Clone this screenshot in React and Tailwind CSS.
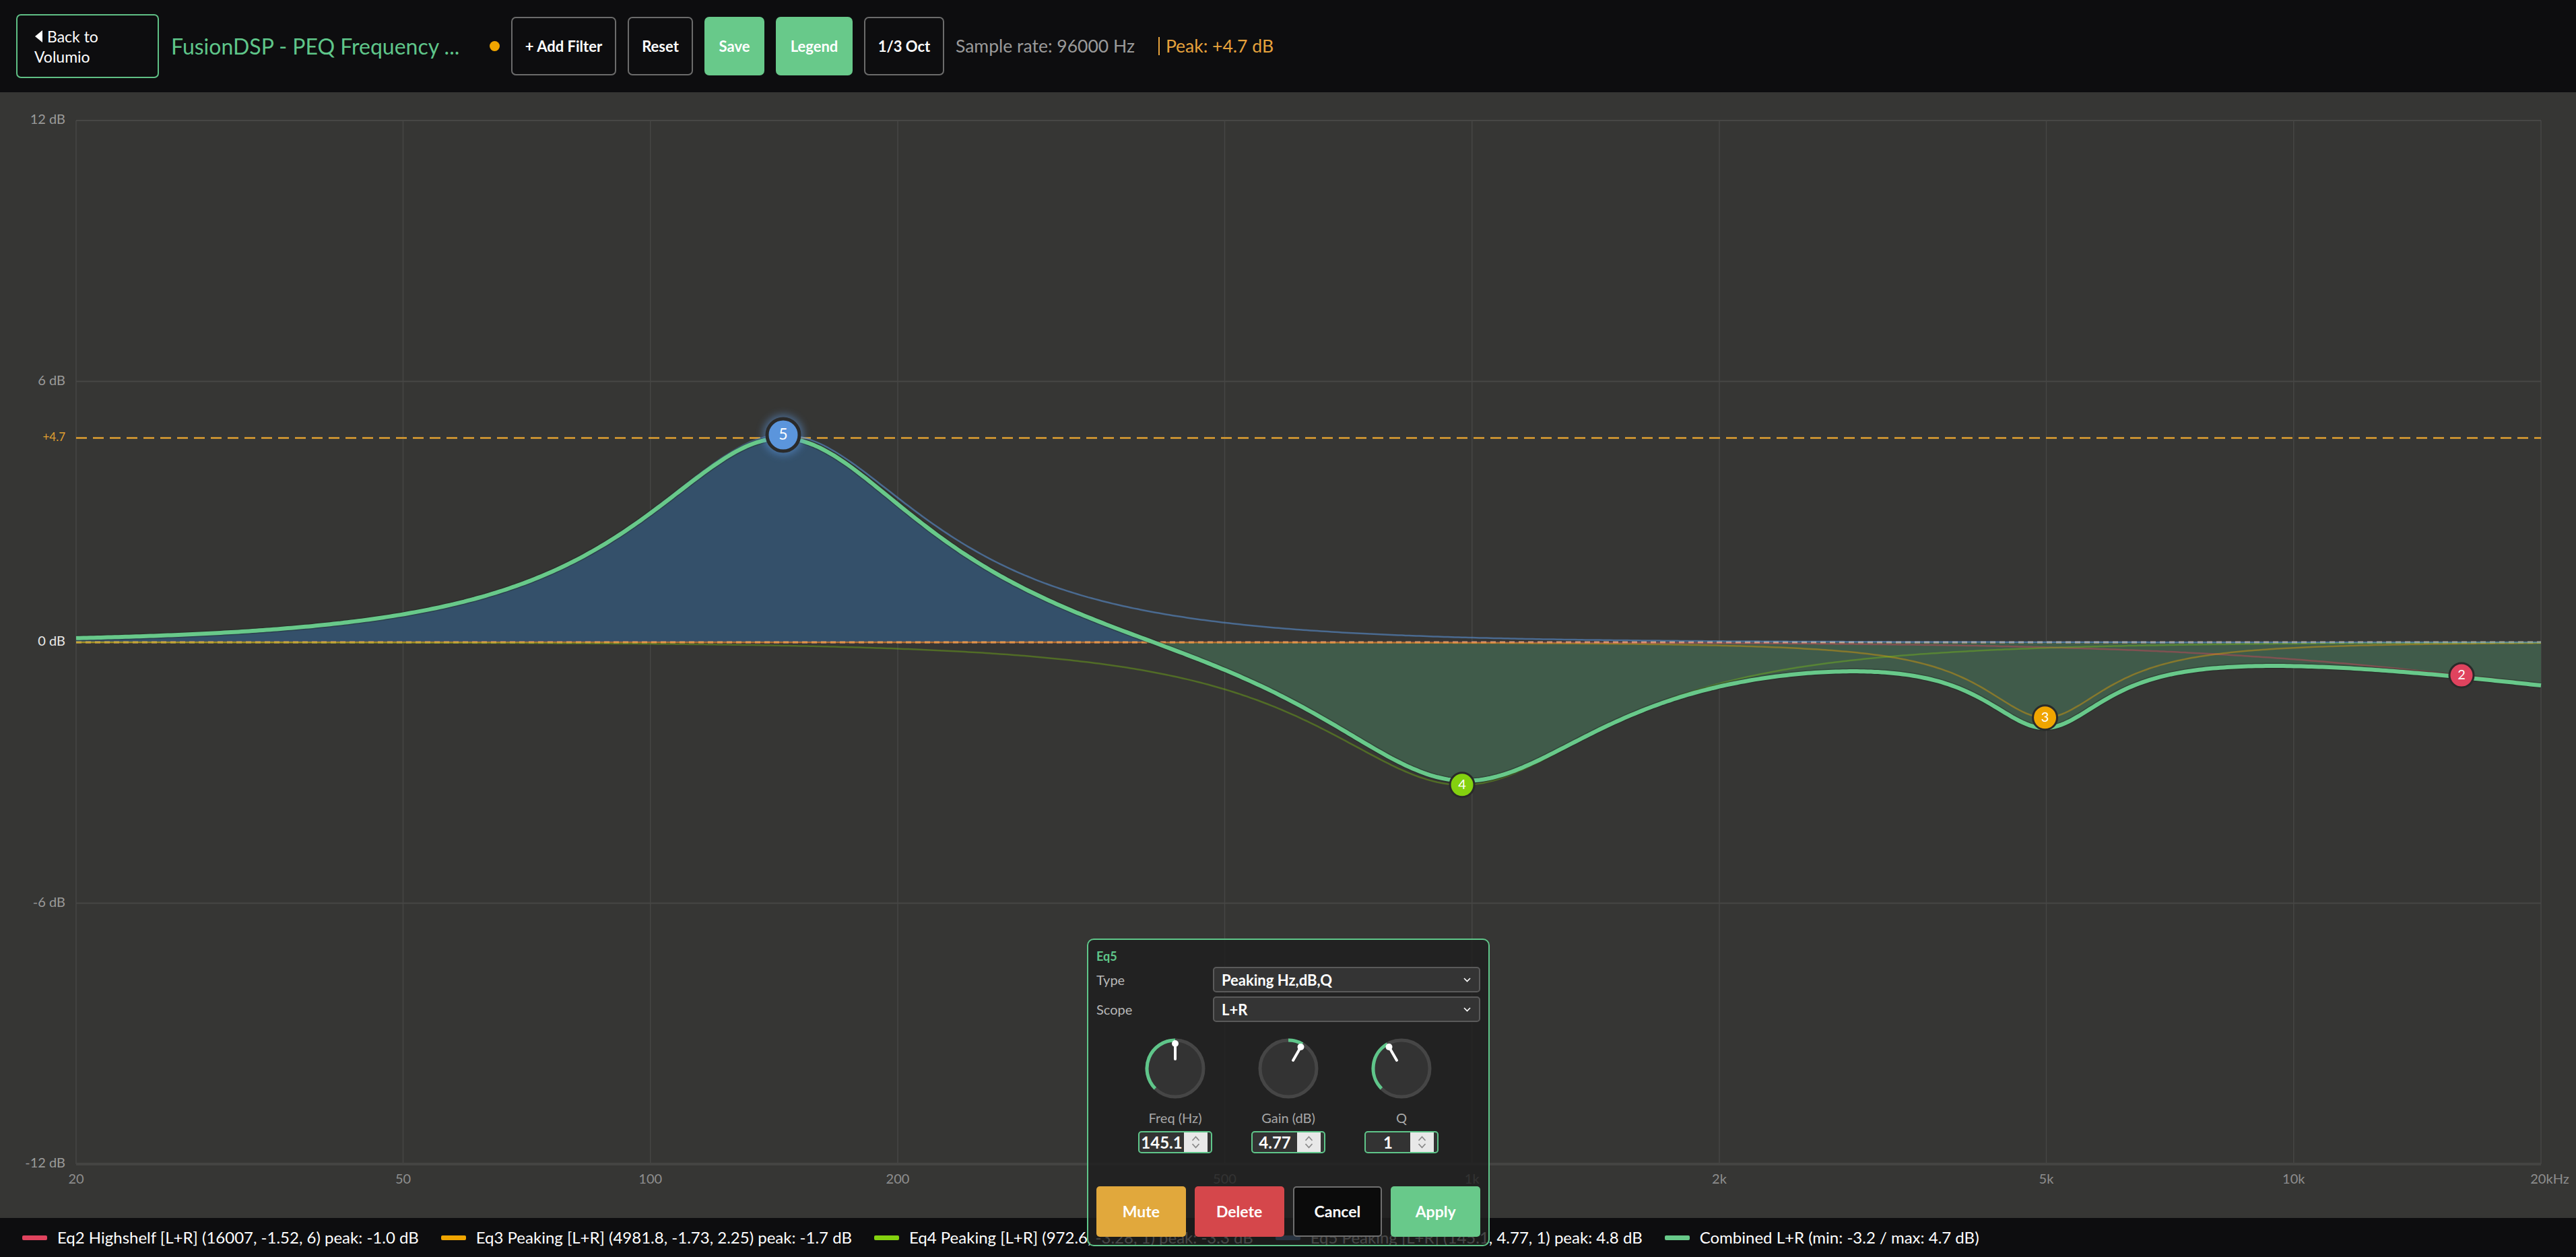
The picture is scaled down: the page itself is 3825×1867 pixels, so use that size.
import React from 'react';

const FS = 96000;

// plot geometry inside the chart svg
const X0 = 113;
const X1 = 3773;
const YT = 42;
const YB = 1592;
const ZERO = (YT + YB) / 2;
const DB_PX = (YB - YT) / 24;

const fx = (f) => X0 + ((X1 - X0) * Math.log10(f / 20)) / 3;
const fy = (db) => ZERO - db * DB_PX;

function peaking(f0, g, q) {
  const A = Math.pow(10, g / 40);
  const w0 = (2 * Math.PI * f0) / FS;
  const alpha = Math.sin(w0) / (2 * q);
  const c = Math.cos(w0);
  return {
    b: [1 + alpha * A, -2 * c, 1 - alpha * A],
    a: [1 + alpha / A, -2 * c, 1 - alpha / A],
  };
}

function highshelf(f0, g, slope) {
  const A = Math.pow(10, g / 40);
  const S = slope / 12;
  const w0 = (2 * Math.PI * f0) / FS;
  const c = Math.cos(w0);
  const alpha = (Math.sin(w0) / 2) * Math.sqrt((A + 1 / A) * (1 / S - 1) + 2);
  const sa = 2 * Math.sqrt(A) * alpha;
  return {
    b: [A * (A + 1 + (A - 1) * c + sa), -2 * A * (A - 1 + (A + 1) * c), A * (A + 1 + (A - 1) * c - sa)],
    a: [A + 1 - (A - 1) * c + sa, 2 * (A - 1 - (A + 1) * c), A + 1 - (A - 1) * c - sa],
  };
}

function magDb({ b, a }, f) {
  const w = (2 * Math.PI * f) / FS;
  const c1 = Math.cos(w), s1 = Math.sin(w), c2 = Math.cos(2 * w), s2 = Math.sin(2 * w);
  const nr = b[0] + b[1] * c1 + b[2] * c2;
  const ni = -(b[1] * s1 + b[2] * s2);
  const dr = a[0] + a[1] * c1 + a[2] * c2;
  const di = -(a[1] * s1 + a[2] * s2);
  return 10 * Math.log10((nr * nr + ni * ni) / (dr * dr + di * di));
}

const filters = [
  { id: 2, coef: highshelf(16007, -1.52, 6), f: 16007, node: -0.76, color: '#e0435e', alpha: 0.4 },
  { id: 3, coef: peaking(4981.8, -1.73, 2.25), f: 4981.8, node: -1.73, color: '#f0a500', alpha: 0.4 },
  { id: 4, coef: peaking(972.6, -3.28, 1), f: 972.6, node: -3.28, color: '#84d10f', alpha: 0.35 },
  { id: 5, coef: peaking(145.1, 4.77, 1), f: 145.1, node: 4.77, color: '#5b95dc', alpha: 0.55 },
];

const freqs = Array.from({ length: 700 }, (_, i) => 20 * Math.pow(1000, i / 699));

const toPath = (vals) =>
  vals.map((v, i) => `${i ? 'L' : 'M'}${fx(freqs[i]).toFixed(1)},${fy(v).toFixed(1)}`).join(' ');

const perFilter = filters.map((flt) => freqs.map((f) => magDb(flt.coef, f)));
const combined = freqs.map((_, i) => perFilter.reduce((s, arr) => s + arr[i], 0));
const combinedPath = toPath(combined);
const fillPath = `M${X0},${ZERO} ${combinedPath.replace(/^M/, 'L')} L${X1},${ZERO} Z`;

const gridFreqs = [20, 50, 100, 200, 500, 1000, 2000, 5000, 10000, 20000];
const freqLabels = ['20', '50', '100', '200', '500', '1k', '2k', '5k', '10k', '20kHz'];
const dbLines = [12, 6, 0, -6, -12];

function Chart() {
  return (
    <svg width="3825" height="1672" className="block" style={{ fontFamily: 'Lato, sans-serif' }}>
      <defs>
        <linearGradient id="fillGrad" gradientUnits="userSpaceOnUse" x1="0" y1={YT} x2="0" y2={YB}>
          <stop offset="0.5" stopColor="#34506a" />
          <stop offset="0.5" stopColor="#405b4a" />
        </linearGradient>
        <filter id="glow" x="-1" y="-1" width="3" height="3">
          <feGaussianBlur stdDeviation="6" />
        </filter>
      </defs>

      {/* grid */}
      {gridFreqs.map((f) => (
        <line key={f} x1={fx(f)} x2={fx(f)} y1={YT} y2={YB} stroke="#464644" strokeWidth="1.5" />
      ))}
      {dbLines.map((d) => (
        <line key={d} x1={X0} x2={X1} y1={fy(d)} y2={fy(d)} stroke="#474745" strokeWidth="2" />
      ))}
      <line x1={X0} x2={X1} y1={YB} y2={YB} stroke="#444442" strokeWidth="4" />

      {/* axis labels */}
      {dbLines.map((d) => (
        <text
          key={d}
          x="97"
          y={fy(d)}
          textAnchor="end"
          dominantBaseline="middle"
          fontSize="20"
          fill={d === 0 ? '#e8e8e8' : '#9a9a9a'}
        >
          {`${d} dB`}
        </text>
      ))}
      <text x="97" y={fy(4.7)} textAnchor="end" dominantBaseline="middle" fontSize="17" fill="#e0a030">
        +4.7
      </text>
      {gridFreqs.map((f, i) => (
        <text
          key={f}
          x={i === 9 ? fx(f) + 13 : fx(f)}
          y="1616"
          textAnchor="middle"
          dominantBaseline="middle"
          fontSize="20"
          fill="#8e8e8e"
        >
          {freqLabels[i]}
        </text>
      ))}

      {/* combined fill */}
      <path d={fillPath} fill="url(#fillGrad)" />

      {/* zero + peak lines */}
      <line x1={X0} x2={X1} y1={ZERO} y2={ZERO} stroke="#d7b080" strokeWidth="3" strokeDasharray="8 6" />
      <line x1={X0} x2={X1} y1={fy(4.7)} y2={fy(4.7)} stroke="#e0a030" strokeWidth="2.5" strokeDasharray="16 9" />

      {/* individual filters */}
      {filters.map((flt, i) => (
        <path
          key={flt.id}
          d={toPath(perFilter[i])}
          fill="none"
          stroke={flt.color}
          strokeOpacity={flt.alpha}
          strokeWidth="2.5"
        />
      ))}

      {/* combined */}
      <path d={combinedPath} fill="none" stroke="#1f2a22" strokeOpacity="0.4" strokeWidth="9" />
      <path d={combinedPath} fill="none" stroke="#68c98a" strokeWidth="6" />

      {/* nodes */}
      {filters.map((flt) => {
        const cx = fx(flt.f);
        const cy = fy(flt.node);
        const sel = flt.id === 5;
        return (
          <g key={flt.id}>
            {sel && <circle cx={cx} cy={cy} r="30" fill="#5b95dc" opacity="0.55" filter="url(#glow)" />}
            <circle
              cx={cx}
              cy={cy}
              r={sel ? 24 : 18}
              fill={flt.color}
              stroke="#2a2a2a"
              strokeWidth={sel ? 5 : 3}
            />
            <text
              x={cx}
              y={cy + 1}
              textAnchor="middle"
              dominantBaseline="middle"
              fontSize={sel ? 23 : 20}
              fill="#ffffff"
            >
              {flt.id}
            </text>
          </g>
        );
      })}
    </svg>
  );
}

function Knob({ from, to }) {
  const r = 42;
  const c = 46;
  const pt = (deg, rad) => {
    const t = ((deg - 90) * Math.PI) / 180;
    return [c + rad * Math.cos(t), c + rad * Math.sin(t)];
  };
  const [sx, sy] = pt(from, r);
  const [ex, ey] = pt(to, r);
  const large = to - from > 180 ? 1 : 0;
  const [lx1, ly1] = pt(to, 14);
  const [lx2, ly2] = pt(to, 37);
  return (
    <svg width="92" height="92" viewBox="0 0 92 92">
      <circle cx={c} cy={c} r={r} fill="#333333" stroke="#464646" strokeWidth="5" />
      <path d={`M${sx},${sy} A${r},${r} 0 ${large} 1 ${ex},${ey}`} fill="none" stroke="#5fc68a" strokeWidth="5" />
      <line x1={lx1} y1={ly1} x2={lx2} y2={ly2} stroke="#ffffff" strokeWidth="4" strokeLinecap="round" />
      <circle cx={lx2} cy={ly2} r="5" fill="#ffffff" />
    </svg>
  );
}

function NumberBox({ value }) {
  return (
    <div className="flex h-[33px] w-[110px] overflow-hidden rounded-[5px] border-2 border-[#5fc68a] bg-[#333333]">
      <div className="flex flex-1 items-center justify-center overflow-hidden whitespace-nowrap text-[24px] font-bold leading-none text-white">
        {value}
      </div>
      <div className="mr-[5px] flex w-[35px] flex-col items-center justify-center gap-[3px] bg-[#e8e8e8]">
        <svg width="13" height="8" viewBox="0 0 13 8">
          <path d="M1.5 7 L6.5 1.5 L11.5 7" fill="none" stroke="#8a8a8a" strokeWidth="1.8" />
        </svg>
        <svg width="13" height="8" viewBox="0 0 13 8">
          <path d="M1.5 1 L6.5 6.5 L11.5 1" fill="none" stroke="#8a8a8a" strokeWidth="1.8" />
        </svg>
      </div>
    </div>
  );
}

function SelectBox({ label, value }) {
  return (
    <div className="flex items-center">
      <div className="w-[173px] text-[20px] text-[#b8b8b8]">{label}</div>
      <div className="flex h-[38px] flex-1 items-center justify-between rounded-[5px] border-2 border-[#5a5a5a] bg-[#343434] pl-[11px] pr-[12px]">
        <span className="text-[22px] font-bold text-white">{value}</span>
        <svg width="11" height="7" viewBox="0 0 11 7">
          <path d="M1 1 L5.5 5.5 L10 1" fill="none" stroke="#ffffff" strokeWidth="1.6" />
        </svg>
      </div>
    </div>
  );
}

const knobs = [
  { label: 'Freq (Hz)', value: '145.1', from: -135, to: 0 },
  { label: 'Gain (dB)', value: '4.77', from: 0, to: 30 },
  { label: 'Q', value: '1', from: -135, to: -30 },
];

const legend = [
  { color: '#e0435e', text: 'Eq2 Highshelf [L+R] (16007, -1.52, 6) peak: -1.0 dB' },
  { color: '#f0a500', text: 'Eq3 Peaking [L+R] (4981.8, -1.73, 2.25) peak: -1.7 dB' },
  { color: '#84d10f', text: 'Eq4 Peaking [L+R] (972.6, -3.28, 1) peak: -3.3 dB' },
  { color: '#5b95dc', text: 'Eq5 Peaking [L+R] (145.1, 4.77, 1) peak: 4.8 dB' },
  { color: '#68c98a', text: 'Combined L+R (min: -3.2 / max: 4.7 dB)' },
];

export default function App() {
  return (
    <div className="relative flex h-[1867px] w-full flex-col overflow-hidden bg-[#363634] font-['Lato',sans-serif]">
      {/* Header */}
      <div className="flex h-[137px] shrink-0 items-center bg-[#0d0d0f] pl-[24px]">
        <button className="flex h-[95px] w-[212px] flex-col justify-center rounded-[7px] border-2 border-[#5fbf85] pl-[25px] text-left text-[23px] leading-[30px] text-white">
          <span className="flex items-center gap-[6px]">
            <svg width="13" height="20" viewBox="0 0 13 20">
              <path d="M12 1 L1 10 L12 19 Z" fill="#ffffff" />
            </svg>
            Back to
          </span>
          <span>Volumio</span>
        </button>
        <div className="ml-[18px] w-[473px] whitespace-nowrap text-[32px] text-[#5fc68a]">FusionDSP - PEQ Frequency ...</div>
        <div className="h-[15px] w-[15px] rounded-full bg-[#f0a500]" />
        <div className="ml-[17px] flex items-center gap-[17px] text-[22px] font-bold text-white">
          <button className="h-[87px] w-[156px] rounded-[7px] border-2 border-[#6b6b6b]">+ Add Filter</button>
          <button className="h-[87px] w-[97px] rounded-[7px] border-2 border-[#6b6b6b]">Reset</button>
          <button className="h-[87px] w-[89px] rounded-[7px] bg-[#68c98a]">Save</button>
          <button className="h-[87px] w-[114px] rounded-[7px] bg-[#68c98a]">Legend</button>
          <button className="h-[87px] w-[119px] rounded-[7px] border-2 border-[#6b6b6b]">1/3 Oct</button>
        </div>
        <span className="ml-[17px] text-[26.5px] text-[#9a9a9a]">Sample rate: 96000 Hz</span>
        <span className="ml-[35px] border-l-2 border-[#e6a23c] pl-[9px] text-[26.5px] leading-[27px] text-[#e6a23c]">
          Peak: +4.7 dB
        </span>
      </div>

      {/* Chart */}
      <div className="h-[1672px] shrink-0 bg-[#363634]">
        <Chart />
      </div>

      {/* Legend */}
      <div className="flex h-[58px] shrink-0 items-center gap-[33px] bg-[#0d0d0f] pl-[33px]">
        {legend.map((l) => (
          <div key={l.text} className="flex items-center gap-[15px]">
            <span className="h-[7px] w-[37px] rounded-[2px]" style={{ backgroundColor: l.color }} />
            <span className="whitespace-nowrap text-[24px] text-white">{l.text}</span>
          </div>
        ))}
      </div>

      {/* Filter editor popup */}
      <div className="absolute left-[1614px] top-[1394px] flex h-[457px] w-[598px] flex-col rounded-[10px] border-2 border-[#5fc68a] bg-[rgba(30,30,30,0.82)] px-[12px] pt-[12px]">
        <div className="h-[24px] text-[18px] font-bold leading-[24px] text-[#5fc68a]">Eq5</div>
        <div className="mt-[4px] flex flex-col gap-[6px]">
          <SelectBox label="Type" value="Peaking Hz,dB,Q" />
          <SelectBox label="Scope" value="L+R" />
        </div>
        <div className="mt-[23px] flex justify-center">
          {knobs.map((k) => (
            <div key={k.label} className="flex w-[168px] flex-col items-center">
              <Knob from={k.from} to={k.to} />
              <div className="mt-[15px] text-[20px] leading-[24px] text-[#a8a8a8]">{k.label}</div>
              <div className="mt-[8px]">
                <NumberBox value={k.value} />
              </div>
            </div>
          ))}
        </div>
        <div className="mt-[49px] grid h-[75px] grid-cols-4 gap-[13px] text-[23px] font-bold text-white">
          <button className="rounded-[5px] bg-[#e1a83c]">Mute</button>
          <button className="rounded-[5px] bg-[#d5474b]">Delete</button>
          <button className="rounded-[5px] border-2 border-[#6f6f6f] bg-[#0b0b0b]">Cancel</button>
          <button className="rounded-[5px] bg-[#68c98a]">Apply</button>
        </div>
      </div>
    </div>
  );
}
